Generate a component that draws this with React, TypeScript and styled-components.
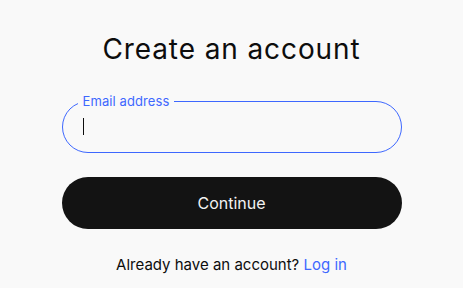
import { useState } from "react";
import styled, { createGlobalStyle } from "styled-components";

const GlobalStyle = createGlobalStyle`
    html, body {
        margin: 0;
        padding: 0;
        background: #f9f9f9;
        font-family: Inter, "Noto Sans", sans-serif;
        color: #0d0d0d;
    }
`;

const Page = styled.main`
    display: flex;
    flex-direction: column;
    align-items: center;
    padding-top: 31px;
`;

const Title = styled.h1`
    margin: 0 0 34px;
    font-size: 28px;
    line-height: 36px;
    font-weight: 400;
    letter-spacing: 0.9px;
`;

const Form = styled.form`
    width: 340px;
    display: flex;
    flex-direction: column;
    gap: 24px;
`;

const Field = styled.div`
    position: relative;
`;

const FloatingLabel = styled.label`
    position: absolute;
    top: -8px;
    left: 16px;
    padding: 0 5px;
    background: #f9f9f9;
    color: #3e68ff;
    font-size: 13px;
    line-height: 16px;
    letter-spacing: 0.1px;
`;

// the screenshot shows a caret in the empty, focused field
const Caret = styled.span`
    position: absolute;
    left: 21px;
    top: 17px;
    width: 1px;
    height: 17px;
    background: #0d0d0d;
    pointer-events: none;
`;

const Input = styled.input`
    box-sizing: border-box;
    width: 100%;
    height: 52px;
    padding: 0 20px;
    border: 1px solid #3e68ff;
    border-radius: 26px;
    background: transparent;
    font: inherit;
    font-size: 16px;
    color: #0d0d0d;
    outline: none;
    caret-color: transparent;
`;

const Button = styled.button`
    height: 52px;
    border: none;
    border-radius: 26px;
    background: #131313;
    color: #f2f2f2;
    font: inherit;
    font-size: 16px;
    cursor: pointer;
`;

const Footer = styled.p`
    margin: 26px 0 0;
    font-size: 15px;
    line-height: 20px;
    text-align: center;
`;

const Link = styled.a`
    color: #3e68ff;
    text-decoration: none;
`;

export default function App() {
    const [email, setEmail] = useState("");

    return <>
        <GlobalStyle />
        <Page>
            <Title>Create an account</Title>
            <Form onSubmit={(e) => e.preventDefault()}>
                <Field>
                    <FloatingLabel htmlFor="email">Email address</FloatingLabel>
                    <Input id="email" type="email" autoFocus value={email} onChange={(e) => setEmail(e.target.value)} />
                    {email === "" && <Caret />}
                </Field>
                <Button type="submit">Continue</Button>
            </Form>
            <Footer>Already have an account? <Link href="#">Log in</Link></Footer>
        </Page>
    </>;
}
